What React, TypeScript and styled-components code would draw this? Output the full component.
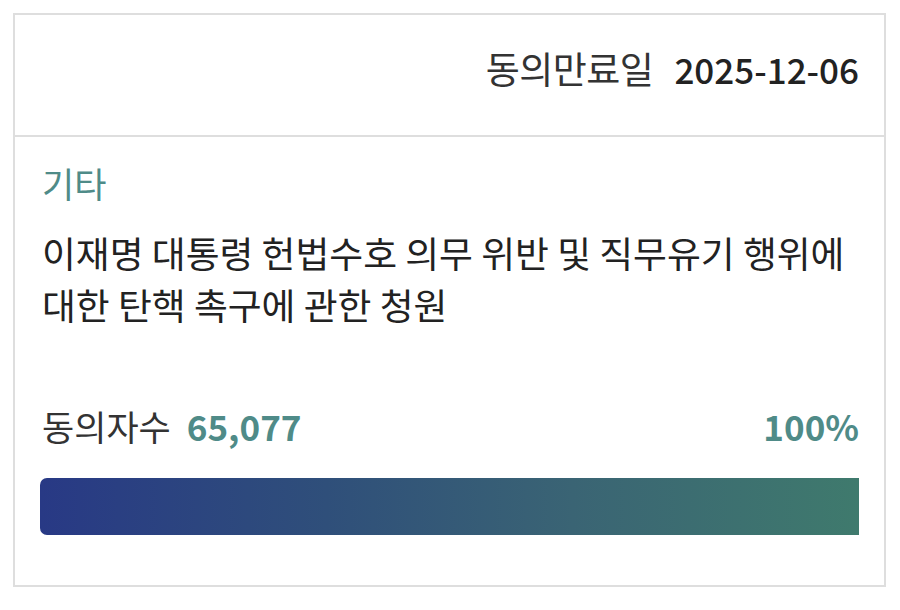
import { createGlobalStyle, styled } from 'styled-components';

const GlobalStyle = createGlobalStyle`
  html, body {
    margin: 0;
    padding: 0;
    background: #ffffff;
  }
  body {
    font-family: "Noto Sans CJK KR", "Noto Sans", sans-serif;
    color: #222;
  }
`;

const Page = styled.div`
  width: 900px;
  height: 610px;
  padding: 13px 14px 0 13px;
  box-sizing: border-box;
`;

const Card = styled.div`
  border: 2px solid #dedede;
  background: #fff;
  display: flex;
  flex-direction: column;
  height: 574px;
  box-sizing: border-box;
`;

const Header = styled.div`
  height: 122px;
  box-sizing: border-box;
  border-bottom: 2px solid #dedede;
  display: flex;
  align-items: center;
  justify-content: flex-end;
  padding: 0 25px 14px 25px;
  gap: 21px;

  > .label {
    font-size: 37px;
    font-weight: 400;
    color: #333;
    letter-spacing: -0.5px;
  }

  > .date {
    font-size: 35px;
    font-weight: 500;
    color: #222;
  }
`;

const Body = styled.div`
  padding: 26px 25px 0 25px;
  display: flex;
  flex-direction: column;
`;

const Category = styled.div`
  font-size: 35px;
  line-height: 40px;
  color: #4f8b88;
  padding-left: 2px;
`;

const Title = styled.div`
  margin-top: 23px;
  font-size: 36.8px;
  line-height: 52px;
  color: #222;
  padding-left: 2px;
  white-space: nowrap;
`;

const CountRow = styled.div`
  margin-top: 74px;
  display: flex;
  align-items: center;
  justify-content: space-between;
  line-height: 44px;
  padding-left: 2px;

  > .left {
    display: flex;
    align-items: baseline;
    gap: 16px;
  }

  .label {
    font-size: 35px;
    color: #333;
  }

  .value {
    font-size: 35px;
    font-weight: 700;
    color: #4f8b88;
  }
`;

const Track = styled.div`
  margin-top: 30px;
  height: 57px;
  border-radius: 7px 0 0 7px;
  overflow: hidden;
  background: #eeeeee;
`;

const Fill = styled.div`
  height: 100%;
  background: linear-gradient(90deg, #283985 0%, #2f4f7a 35%, #3a6474 65%, #3f7a6d 100%);
`;

export default function App() {
  const percent = 100;
  return (
    <>
      <GlobalStyle />
      <Page>
        <Card>
          <Header>
            <span className="label">동의만료일</span>
            <span className="date">2025-12-06</span>
          </Header>
          <Body>
            <Category>기타</Category>
            <Title>
              이재명 대통령 헌법수호 의무 위반 및 직무유기 행위에
              <br />
              대한 탄핵 촉구에 관한 청원
            </Title>
            <CountRow>
              <div className="left">
                <span className="label">동의자수</span>
                <span className="value">65,077</span>
              </div>
              <span className="value">{percent}%</span>
            </CountRow>
            <Track>
              <Fill style={{ width: `${percent}%` }} />
            </Track>
          </Body>
        </Card>
      </Page>
    </>
  );
}
